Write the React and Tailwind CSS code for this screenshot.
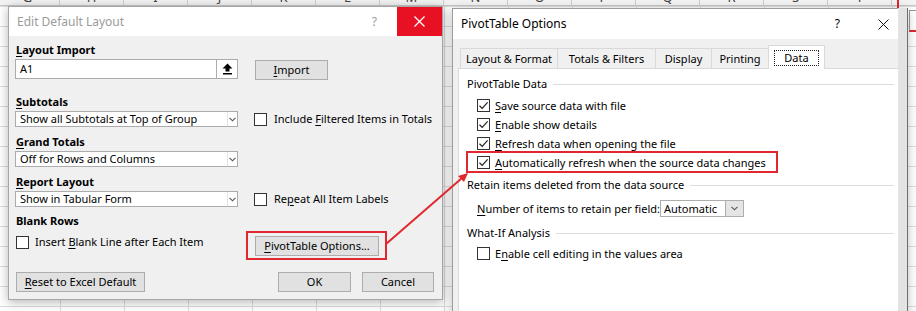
import React from 'react';

const FONT = "font-['Noto_Sans',sans-serif] text-[11px] leading-[16px]";

// underlined access-key letter
function U({ children }) {
  return <span className="underline underline-offset-[2px]">{children}</span>;
}

function Check({ checked }) {
  return (
    <span className="w-[13px] h-[13px] shrink-0 bg-white border border-[#333] flex items-center justify-center">
      {checked && (
        <svg width="11" height="11" viewBox="0 0 11 11">
          <path d="M1.5 5.8 L4.2 8.4 L9.6 2.4" fill="none" stroke="#222" strokeWidth="1.2" />
        </svg>
      )}
    </span>
  );
}

function Chevron() {
  return (
    <svg width="7" height="5" viewBox="0 0 7 5">
      <path d="M0.5 0.8 L3.5 3.8 L6.5 0.8" fill="none" stroke="#555" strokeWidth="1.1" />
    </svg>
  );
}

function Select({ value }) {
  return (
    <div className="w-[223px] h-[16px] shrink-0 bg-white border border-[#acacac] flex items-center">
      <span className="flex-1 pl-[4px] text-black whitespace-nowrap">{value}</span>
      <span className="w-[10px] h-full flex items-center justify-center border-l border-[#e4e4e4]">
        <Chevron />
      </span>
    </div>
  );
}

function Btn({ className = '', children }) {
  return (
    <div className={`h-[20px] shrink-0 bg-[#e1e1e1] border border-[#adadad] flex items-center justify-center text-black whitespace-nowrap ${className}`}>
      {children}
    </div>
  );
}

function Label({ children }) {
  return <div className="h-[16px] font-bold text-black pl-[1px] whitespace-nowrap">{children}</div>;
}

function EditDefaultLayout() {
  return (
    <div className="absolute left-[8px] top-[6px] w-[435px] h-[294px] bg-[#f0f0f0] border border-[#a6a6a6] shadow-[0_2px_10px_rgba(0,0,0,0.3)] flex flex-col">
      <div className="h-[29px] shrink-0 bg-white flex items-center pl-[8px]">
        <span className="text-[#9b9b9b] text-[12px]">Edit Default Layout</span>
        <span className="ml-auto mr-[20px] text-[#9b9b9b] text-[12px]">?</span>
        <div className="w-[45px] h-[29px] bg-[#e81123] flex items-center justify-center">
          <svg width="11" height="11" viewBox="0 0 11 11">
            <path d="M0.5 0.5 L10.5 10.5 M10.5 0.5 L0.5 10.5" stroke="#fff" strokeWidth="1.3" />
          </svg>
        </div>
      </div>

      <div className="flex-1 flex flex-col pl-[6px] pt-[6px]">
        <Label><U>L</U>ayout Import</Label>
        <div className="flex items-start mt-[1px]">
          <div className="w-[202px] h-[20px] bg-white border border-[#acacac] flex items-center pl-[4px] text-black">A1</div>
          <div className="w-[21px] h-[20px] bg-white border border-[#acacac] border-l-0 flex items-center justify-center">
            <svg width="11" height="12" viewBox="0 0 11 12">
              <polygon points="5.5,0.5 10.5,5.5 7.5,5.5 7.5,8.5 3.5,8.5 3.5,5.5 0.5,5.5" fill="#000" />
              <rect x="1" y="10" width="9" height="1.5" fill="#000" />
            </svg>
          </div>
          <Btn className="ml-[17px] mt-[1px] w-[73px]"><U>I</U>mport</Btn>
        </div>

        <div className="mt-[14px]">
          <Label><U>S</U>ubtotals</Label>
          <div className="flex items-center mt-[1px]">
            <Select value="Show all Subtotals at Top of Group" />
            <span className="ml-[16px]"><Check /></span>
            <span className="ml-[7px] text-black whitespace-nowrap">Include <U>F</U>iltered Items in Totals</span>
          </div>
        </div>

        <div className="mt-[7px]">
          <Label><U>G</U>rand Totals</Label>
          <div className="flex items-center mt-[1px]">
            <Select value="Off for Rows and Columns" />
          </div>
        </div>

        <div className="mt-[7px]">
          <Label><U>R</U>eport Layout</Label>
          <div className="flex items-center mt-[1px]">
            <Select value="Show in Tabular Form" />
            <span className="ml-[16px]"><Check /></span>
            <span className="ml-[7px] text-black whitespace-nowrap">Re<U>p</U>eat All Item Labels</span>
          </div>
        </div>

        <div className="mt-[6px]">
          <Label>Blank Rows</Label>
        </div>
        <div className="flex items-start mt-[5px]">
          <div className="w-[223px] h-[16px] shrink-0 flex items-center pl-[1px]">
            <Check />
            <span className="ml-[6px] text-black whitespace-nowrap">Insert <U>B</U>lank Line after Each Item</span>
          </div>
          <Btn className="ml-[17px] mt-[2px] w-[124px] h-[19px]"><U>P</U>ivotTable Options...</Btn>
        </div>

        <div className="mt-auto mb-[7px] flex items-center">
          <Btn className="ml-[1px] w-[129px]"><U>R</U>eset to Excel Default</Btn>
          <Btn className="ml-[133px] w-[73px]">OK</Btn>
          <Btn className="ml-[11px] w-[72px]">Cancel</Btn>
        </div>
      </div>
    </div>
  );
}

function Group({ children }) {
  return (
    <div className="flex items-center h-[16px] pl-[8px] pr-[4px]">
      <span className="text-black whitespace-nowrap">{children}</span>
      <span className="flex-1 ml-[6px] h-px bg-[#dcdcdc]" />
    </div>
  );
}

function CheckRow({ checked, children }) {
  return (
    <div className="h-[19px] flex items-center pl-[18px]">
      <Check checked={checked} />
      <span className="ml-[5px] text-black whitespace-nowrap">{children}</span>
    </div>
  );
}

const tabs = [
  { label: 'Layout & Format', w: 'w-[97px]' },
  { label: 'Totals & Filters', w: 'w-[98px]' },
  { label: 'Display', w: 'w-[56px]' },
  { label: 'Printing', w: 'w-[57px]' },
];

function PivotTableOptions() {
  return (
    <div className="absolute left-[452px] top-[8px] h-[320px] flex shadow-[0_2px_10px_rgba(0,0,0,0.25)]">
      <div className="w-[446px] bg-[#f0f0f0] border-l border-t border-[#9c9c9c] flex flex-col">
        <div className="h-[30px] shrink-0 bg-white flex items-center pl-[8px]">
          <span className="text-black text-[12px]">PivotTable Options</span>
          <span className="ml-auto text-black text-[12px]">?</span>
          <span className="ml-[38px] mr-[9px]">
            <svg width="11" height="11" viewBox="0 0 11 11">
              <path d="M0.5 0.5 L10.5 10.5 M10.5 0.5 L0.5 10.5" stroke="#111" strokeWidth="1" />
            </svg>
          </span>
        </div>

        <div className="flex items-end h-[29px] pl-[7px] shrink-0">
          {tabs.map((t) => (
            <div
              key={t.label}
              className={`${t.w} h-[20px] border border-b-0 border-r-0 border-[#d9d9d9] flex items-center justify-center text-black bg-[#f0f0f0] whitespace-nowrap`}
            >
              {t.label}
            </div>
          ))}
          <div className="w-[57px] h-[24px] -mb-px relative z-10 bg-white border border-b-0 border-[#d9d9d9] flex items-center justify-center">
            <span className="px-[9px] h-[16px] border border-dotted border-[#222] flex items-center text-black leading-none">Data</span>
          </div>
        </div>

        <div className="ml-[5px] flex-1 bg-white border-l border-t border-[#d9d9d9] pt-[7px]">
          <Group>PivotTable Data</Group>
          <div className="mt-[4px]">
            <CheckRow checked><U>S</U>ave source data with file</CheckRow>
            <CheckRow checked><U>E</U>nable show details</CheckRow>
            <CheckRow checked><U>R</U>efresh data when opening the file</CheckRow>
            <CheckRow checked><U>A</U>utomatically refresh when the source data changes</CheckRow>
          </div>
          <div className="mt-[5px]">
            <Group>Retain items deleted from the data source</Group>
          </div>
          <div className="mt-[7px] h-[17px] flex items-center pl-[18px]">
            <span className="w-[183px] shrink-0 text-black whitespace-nowrap"><U>N</U>umber of items to retain per field:</span>
            <div className="w-[84px] h-[17px] bg-white border border-[#adadad] flex items-center">
              <span className="flex-1 pl-[3px] text-black">Automatic</span>
              <span className="w-[18px] h-full bg-[#e5e5e5] border-l border-[#adadad] flex items-center justify-center">
                <Chevron />
              </span>
            </div>
          </div>
          <div className="mt-[8px]">
            <Group>What-If Analysis</Group>
          </div>
          <div className="mt-[3px]">
            <CheckRow>E<U>n</U>able cell editing in the values area</CheckRow>
          </div>
        </div>
      </div>
      <div className="w-[10px] bg-[#e3e3e3] border-r border-[#6e6e6e]" />
    </div>
  );
}

const cols = ['G', 'H', 'I', 'J', 'K', 'L', 'M', 'N', 'O', 'P', 'Q', 'R', 'S', 'T', 'U'];

export default function App() {
  return (
    <div
      className={`relative w-[916px] h-[311px] overflow-hidden bg-white ${FONT} bg-[linear-gradient(to_right,#dcdcdc_1px,transparent_1px),linear-gradient(to_bottom,#dcdcdc_1px,transparent_1px)] bg-size-[64px_20px] bg-position-[60px_6px]`}
    >
      {/* column header strip, mostly scrolled off */}
      <div className="h-[6px] overflow-hidden bg-[#f3f3f3] border-b border-[#c8c8c8]">
        <div className="flex -mt-[12px] -ml-[4px]">
          {cols.map((c) => (
            <div key={c} className="w-[64px] h-[18px] shrink-0 border-r border-[#d0d0d0] flex items-center justify-center text-[13px] text-[#444]">
              {c}
            </div>
          ))}
        </div>
      </div>
      <div className="absolute left-[897px] top-0 w-[2px] h-[9px] bg-[#e0282e]" />
      <div className="absolute left-[909px] top-[10px] w-[8px] h-[22px] bg-white border-l border-t border-[#999] border-b-2 border-b-[#e0282e]" />

      <EditDefaultLayout />
      <PivotTableOptions />

      {/* annotations */}
      <div className="absolute left-[246px] top-[231px] w-[141px] h-[29px] border-2 border-[#e0282e]" />
      <div className="absolute left-[466px] top-[151px] w-[312px] h-[22px] border-2 border-[#e0282e]" />
      <svg className="absolute left-0 top-0" width="916" height="311" viewBox="0 0 916 311">
        <line x1="386" y1="244" x2="462" y2="178" stroke="#e0282e" strokeWidth="2" />
        <polygon points="468,173 458,176 464,182" fill="#e0282e" />
      </svg>
    </div>
  );
}
